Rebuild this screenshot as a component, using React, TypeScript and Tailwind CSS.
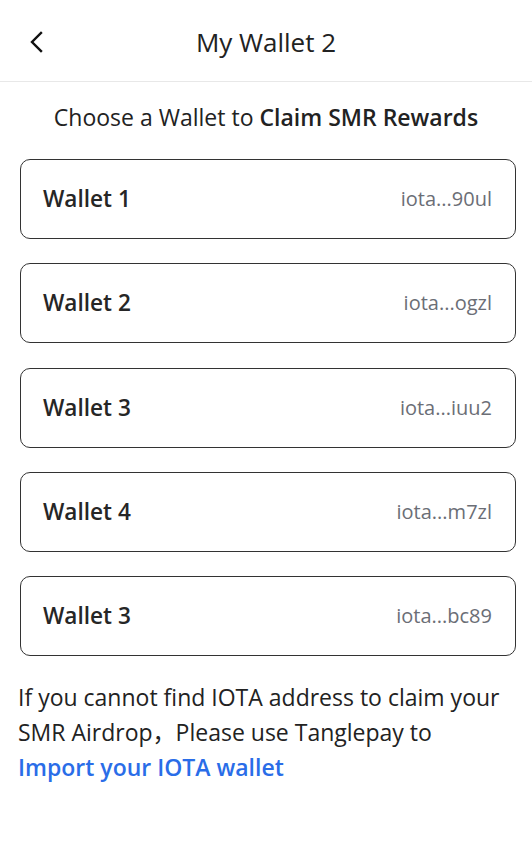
const wallets = [
  { name: "Wallet 1", address: "iota...90ul" },
  { name: "Wallet 2", address: "iota...ogzl" },
  { name: "Wallet 3", address: "iota...iuu2" },
  { name: "Wallet 4", address: "iota...m7zl" },
  { name: "Wallet 3", address: "iota...bc89" },
];

export default function App() {
  return (
    <div
      className="min-h-[858px] w-[532px] bg-white text-[#222]"
      style={{ fontFamily: '"Open Sans", "Noto Sans", "Noto Sans CJK SC", sans-serif' }}
    >
      <header className="relative flex h-[82px] items-center justify-center border-b border-[#e8e8e8] pt-[4px]">
        <button className="absolute left-[29px] top-[31px] p-0" aria-label="Back">
          <svg width="14" height="22" viewBox="0 0 14 22" fill="none">
            <path d="M12 2L3 11l9 9" stroke="#111" strokeWidth="2.4" strokeLinecap="square" />
          </svg>
        </button>
        <h1 className="text-[26px] font-normal text-[#222]">My Wallet 2</h1>
      </header>

      <p className="mt-[19px] text-center text-[23px] leading-[32px] text-[#222]">
        Choose a Wallet to <span className="font-semibold">Claim SMR Rewards</span>
      </p>

      <div className="mt-[26px] ml-[20px] mr-[16px] flex flex-col gap-[24.3px]">
        {wallets.map((w, i) => (
          <div
            key={i}
            className="box-border flex h-[80px] items-center justify-between rounded-[10px] border-[1.5px] border-[#333] pl-[22px] pr-[23px]"
          >
            <span className="text-[22.6px] font-semibold text-[#262626]">{w.name}</span>
            <span className="text-[20px] text-[#6b6e76]">{w.address}</span>
          </div>
        ))}
      </div>

      <p className="mt-[24px] px-[18px] text-[23px] leading-[35px] text-[#222]">
        If you cannot find IOTA address to claim your SMR Airdrop，Please use Tanglepay to
        <a href="#" className="block font-semibold text-[#2a6de8]">
          Import your IOTA wallet
        </a>
      </p>
    </div>
  );
}
